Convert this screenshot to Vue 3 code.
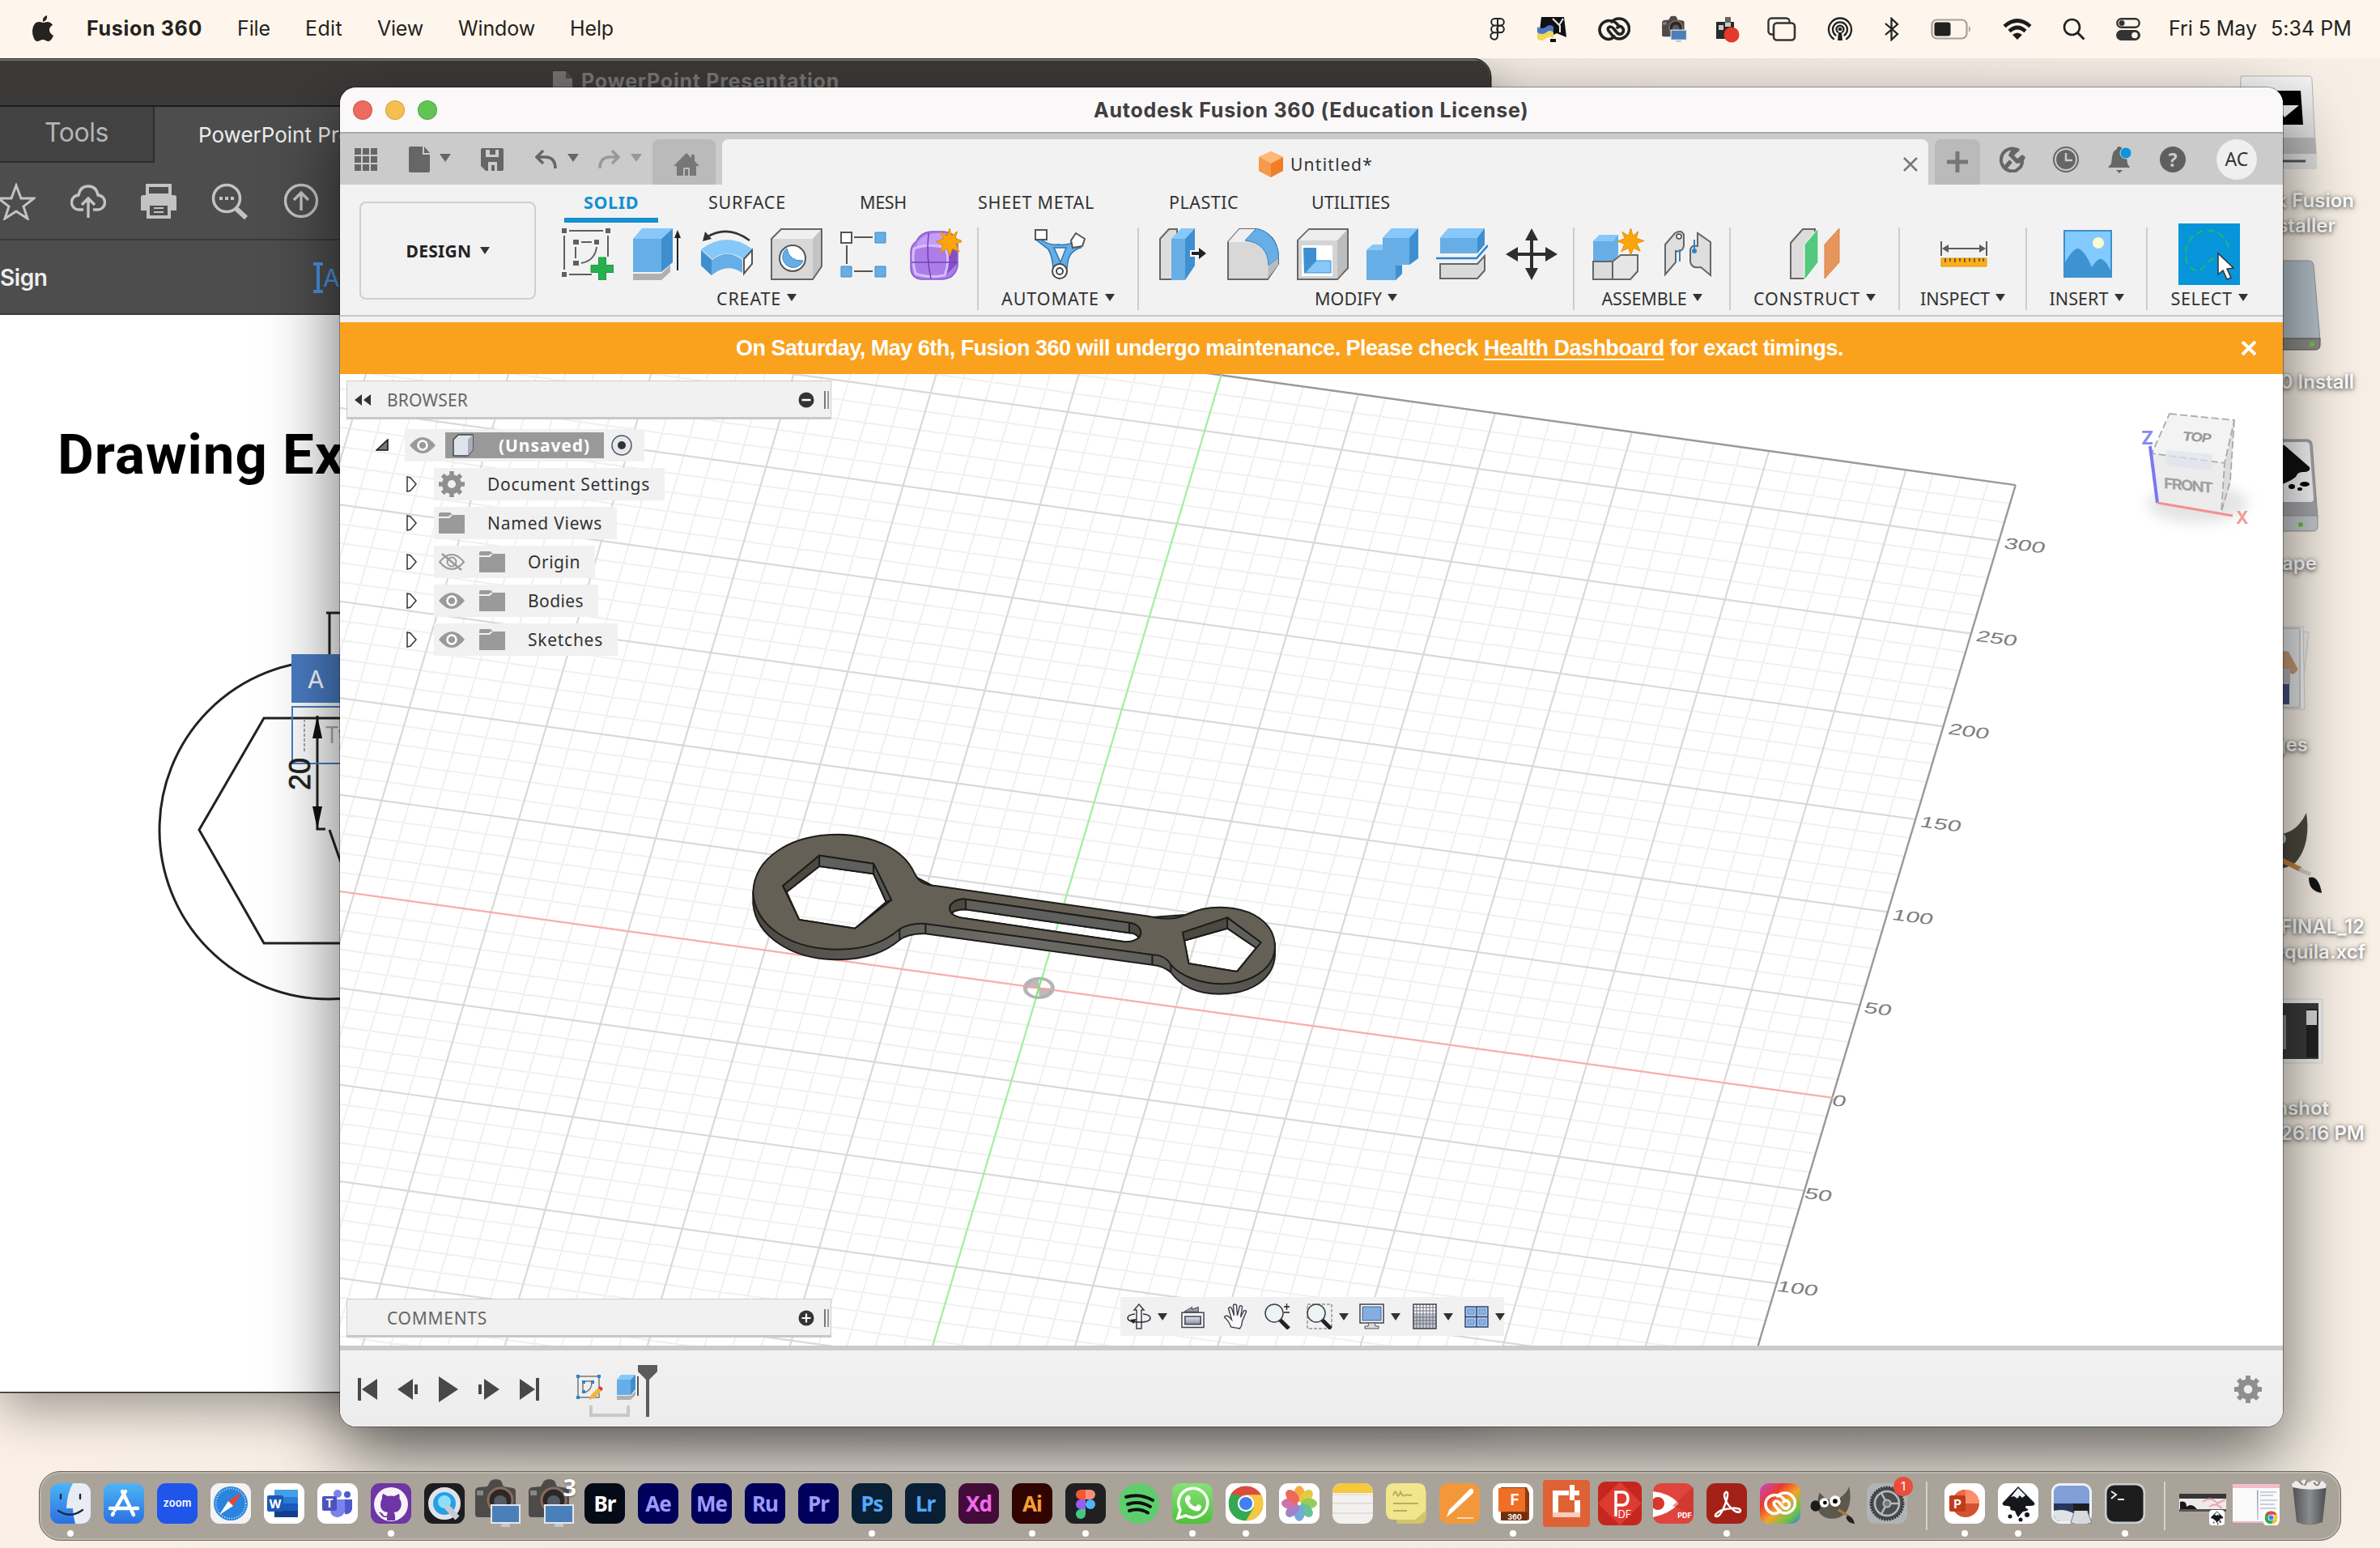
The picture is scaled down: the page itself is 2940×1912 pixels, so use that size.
<script setup>
/* Spreads a label over a known width by adjusting its tracking. */
const vFit = {
  mounted(el, { value }) {
    const w = el.getBoundingClientRect().width
    el.style.letterSpacing = (value - w) / el.textContent.length + 'px'
  }
}

const menus = [['File', 41], ['Edit', 46], ['View', 57], ['Window', 95], ['Help', 54]]
const status = [
  ['figma', 20], ['ukraine', 38], ['cc', 40], ['camera', 33], ['rec', 31], ['stack', 36], ['airdrop', 32],
  ['bt', 20], ['battery', 51], ['wifi', 36], ['search', 28], ['control', 30]
]

const groups = [
  { name: 'CREATE', w: 547, t: 80, icons: ['sketch', 'extrude', 'revolve', 'hole', 'pattern', 'form'] },
  { name: 'AUTOMATE', w: 198, t: 121, icons: ['automate'] },
  { name: 'MODIFY', w: 538, t: 83, icons: ['press', 'fillet', 'shell', 'combine', 'split', 'move'] },
  { name: 'ASSEMBLE', w: 193, t: 105, icons: ['component', 'joint'] },
  { name: 'CONSTRUCT', w: 209, t: 132, icons: ['construct'] },
  { name: 'INSPECT', w: 157, t: 86, icons: ['inspect'] },
  { name: 'INSERT', w: 149, t: 73, icons: ['insert'] },
  { name: 'SELECT', w: 152, t: 76, icons: ['select'] }
]

const tree = [
  { label: 'Document Settings', t: 201, icon: 'gear' },
  { label: 'Named Views', t: 142, icon: 'folder' },
  { label: 'Origin', t: 65, icon: 'folder', eye: 'eyeoff' },
  { label: 'Bodies', t: 69, icon: 'folder', eye: 'eye' },
  { label: 'Sketches', t: 93, icon: 'folder', eye: 'eye' }
]

/* Ground grid: origin plus one vector per 50 mm along each axis. */
const O = [863.4, 758.4], U = [169.2, 23.4], V = [34.1, -114.7]
const P = (i, j) => [O[0] + i * U[0] + j * V[0], O[1] + i * U[1] + j * V[1]]
const seg = (a, b) => `M${a[0].toFixed(1)} ${a[1].toFixed(1)}L${b[0].toFixed(1)} ${b[1].toFixed(1)}`
let minor = '', major = ''
for (let k = -60; k <= 28; k++) {
  const s = seg(P(k / 5, -9), P(k / 5, 6.6))
  if (k % 5) minor += s; else major += s
}
for (let k = -45; k <= 32; k++) {
  const s = seg(P(-9, k / 5), P(5.8, k / 5))
  if (k % 5) minor += s; else major += s
}
const edge = seg(P(-9, 6.6), P(5.8, 6.6)) + seg(P(5.8, 6.6), P(5.78, -9))
const redAxis = seg(P(-9, 0), P(5.8, 0))
const greenAxis = seg(P(0, -9), P(0, 6.6))
const ticks = [300, 250, 200, 150, 100, 50, 0, -50, -100].map(v => {
  const p = P(5.8, v / 50)
  const dx = v > 0 ? 2 + v / 100 : -3
  return { v: Math.abs(v), m: `matrix(1 .13 -.2 .62 ${p[0] + dx} ${p[1] + 9})` }
})

const nav = [['orbit', 30, 1, 8], ['look', 29, 0, 17], ['hand', 31, 0, 23], ['zoom', 32, 0, 20], ['zoomwin', 32, 1, 20], ['display', 31, 1, 13], ['grid', 30, 1, 15], ['views', 30, 1, 14]]

const dock = [
  { i: 'finder', on: 1 }, { i: 'appstore' }, { i: 'zoom' }, { i: 'safari' }, { i: 'word' }, { i: 'teams' }, { i: 'github', on: 1 },
  { i: 'quicktime' }, { i: 'camera' }, { i: 'camera', n: '3' },
  { a: 'Br', c: 'br' }, { a: 'Ae', c: 'ae' }, { a: 'Me', c: 'ae' }, { a: 'Ru', c: 'ae' }, { a: 'Pr', c: 'ae' },
  { a: 'Ps', c: 'ps', on: 1 }, { a: 'Lr', c: 'ps' }, { a: 'Xd', c: 'xd' }, { a: 'Ai', c: 'ai', on: 1 },
  { i: 'figma', on: 1 }, { i: 'spotify' }, { i: 'whatsapp', on: 1 }, { i: 'chrome', on: 1 }, { i: 'photos' }, { i: 'notes' },
  { i: 'stickies' }, { i: 'pages' }, { i: 'fusion', on: 1 }, { i: 'printer' }, { i: 'pdf' }, { i: 'pdfexpert' }, { i: 'acrobat', on: 1 },
  { i: 'cc' }, { i: 'gimp' }, { i: 'settings', badge: '1' }, { sep: 1 },
  { i: 'ppt', on: 1 }, { i: 'inkscape', on: 1 }, { i: 'preview' }, { i: 'terminal', on: 1 }, { sep: 1 },
  { i: 'win1' }, { i: 'win2' }, { i: 'trash' }
]

const deskLabels = [
  { lines: ['Autodesk Fusion', 'Installer'], r: [32, 55], y: 232 },
  { lines: ['Fusion 360 Install'], r: [32], y: 456 },
  { lines: ['Inkscape'], r: [78], y: 680 },
  { lines: ['Images'], r: [89], y: 904 },
  { lines: ['FINAL_12', 'Tequila.xcf'], r: [19, 18], y: 1129 },
  { lines: ['Screenshot', '5.26.16 PM'], r: [63, 19], y: 1353 }
]
</script>

<template>
  <div class="desktop">
    <svg width="0" height="0" class="defs">
      <defs>
        <linearGradient id="gMetal" x1="0" y1="0" x2="0" y2="1"><stop offset="0" stop-color="#f4f4f4"/><stop offset="1" stop-color="#cfd0d2"/></linearGradient>
        <linearGradient id="gBlue" x1="0" y1="0" x2="0" y2="1"><stop offset="0" stop-color="#4cb5f5"/><stop offset="1" stop-color="#2b6fe3"/></linearGradient>
        <linearGradient id="gGreen" x1="0" y1="0" x2="0" y2="1"><stop offset="0" stop-color="#86e277"/><stop offset="1" stop-color="#4fc13a"/></linearGradient>
        <linearGradient id="gSteel" x1="0" y1="0" x2="0" y2="1"><stop offset="0" stop-color="#dfe3ee"/><stop offset="1" stop-color="#8d919c"/></linearGradient>
        <linearGradient id="gTrash" x1="0" y1="0" x2="1" y2="0"><stop offset="0" stop-color="#4f5052"/><stop offset=".5" stop-color="#8b8c8d"/><stop offset="1" stop-color="#4a4b4d"/></linearGradient>
        <linearGradient id="gCc" x1="0" y1="0" x2="1" y2="1"><stop offset="0" stop-color="#c04bd6"/><stop offset=".3" stop-color="#ea3a2f"/><stop offset=".55" stop-color="#f3a42c"/><stop offset=".8" stop-color="#6cc24a"/><stop offset="1" stop-color="#2c7fe0"/></linearGradient>
        <linearGradient id="gWrench" x1="0" y1="0" x2="1" y2="0"><stop offset="0" stop-color="#4e4b44"/><stop offset=".5" stop-color="#6e6d69"/><stop offset="1" stop-color="#54524d"/></linearGradient>

        <symbol id="star" viewBox="0 0 34 34"><path d="M17 0l2.600 9.500L26.500 4l-2.500 8.500L34 16l-9.500 3L29 29l-8.500-4L17 34l-3-9-9 4.500 4-9.500L0 16.500 9.500 13 6 4.500l8 5z" fill="#fca50b" stroke="#e08e00" stroke-width="1"/></symbol>

        <symbol id="r-sketch" viewBox="0 0 64 64">
          <g fill="#5f5f5f"><path d="M0 0h6v6H0zM54 0h6v6h-6zM0 54h6v6H0zM14 14h7v6h-7zM40 14h6v6h-6zM14 40h7v6h-7z"/></g>
          <g fill="none" stroke="#5f5f5f" stroke-width="2"><path d="M9 3h42M3 9v42M57 9v26M9 57h28M24 17h13M17 23v14M43 23q-2 17-19 20"/></g>
          <path d="M45.500 36h9v9.500H64v9h-9.500V64h-9v-9.500H36v-9h9.500z" fill="#27b050" stroke="#159a3e"/>
        </symbol>
        <symbol id="r-extrude" viewBox="0 0 64 64">
          <path d="M2 56h35l11-11v9L37 64H2z" fill="#b0b0b0"/><path d="M2 13h35v41H2z" fill="#67aee6"/><path d="M2 13L13 0h38L37 13z" fill="#87c8fa"/><path d="M37 13L51 0v42L37 54z" fill="#3f8fd0"/>
          <path d="M57 52V8" stroke="#222" stroke-width="2"/><path d="M53 12l4-10 4 10z" fill="#222"/>
        </symbol>
        <symbol id="r-revolve" viewBox="0 0 64 64">
          <path d="M0 26Q32 2 64 26L52 38Q32 24 14 38z" fill="#87c8fa"/><path d="M0 27l14 12Q32 24 51 39v16Q32 42 13 58L0 46z" fill="#67aee6"/><path d="M0 27l13 12v19L0 46z" fill="#3f8fd0"/>
          <path d="M53 38l10-11v17L53 56z" fill="#fff" stroke="#555" stroke-width="2"/><path d="M60 15Q33-5 7 11" fill="none" stroke="#333" stroke-width="2.500"/><path d="M2 16l3-12 8 9z" fill="#333"/>
        </symbol>
        <symbol id="r-hole" viewBox="0 0 64 64">
          <path d="M1 13L13 1h50v46L52 63H1z" fill="#d8d8d8"/><path d="M1 13L13 1h50L52 13z" fill="#f0f0f0"/><path d="M52 13L63 1v46L52 63z" fill="#c4c4c4"/><path d="M1 13L13 1h50v46L52 63H1z" fill="none" stroke="#666" stroke-width="2"/>
          <circle cx="27" cy="37" r="16" fill="#fff" stroke="#555" stroke-width="2"/><path d="M20 25a13 13 0 1 0 20 15Q23 41 20 25z" fill="#67aee6" stroke="#2d84cc"/>
        </symbol>
        <symbol id="r-pattern" viewBox="0 0 64 64">
          <path d="M1 5h13v13H1z" fill="#fff" stroke="#555" stroke-width="2"/><g fill="#67aee6" stroke="#3d8ac9"><path d="M43 5h13v13H43zM1 47h13v13H1zM43 47h13v13H43z"/></g>
          <path d="M17 11h23M17 53h23M8 21v23" stroke="#555" stroke-width="2"/>
        </symbol>
        <symbol id="r-form" viewBox="0 0 64 64">
          <path d="M8 16Q14 4 28 4H42Q58 6 59 20V46Q56 62 40 63H14Q2 62 1 50V28Q2 20 8 16z" fill="#ab7de8" stroke="#8d5bcc" stroke-width="1.500"/>
          <path d="M10 16Q20 4 44 6L46 22H8z" fill="#c59df6"/><path d="M46 26h12v18l-12 12z" fill="#8650c4"/><path d="M5 25Q22 18 44 24Q50 40 43 58Q22 62 7 56Q2 40 5 25z" fill="none" stroke="#d9bcff" stroke-width="3"/><path d="M23 6Q20 36 26 62M2 42h57" fill="none" stroke="#7541ae" stroke-width="1.500"/>
          <use href="#star" x="32" y="0" width="34" height="34"/>
        </symbol>
        <symbol id="r-automate" viewBox="0 0 64 64">
          <path d="M6 12Q20 22 30 20Q44 22 52 14L58 24Q44 28 42 42L40 56Q32 62 24 54Q24 36 18 26L4 15z" fill="#67aee6" stroke="#2c77b8" stroke-width="1.500"/>
          <path d="M25 24h15L33 42z" fill="#f2f2f2" stroke="#2c77b8" stroke-width="1.500"/><path d="M2 2h14v12H2z" fill="#fff" stroke="#555" stroke-width="2"/><path d="M52 6l11 7-3 9-12 2-2-9z" fill="#fff" stroke="#555" stroke-width="2"/><circle cx="32" cy="53" r="9" fill="#fff" stroke="#444" stroke-width="2"/><circle cx="32" cy="53" r="4" fill="#fff" stroke="#444" stroke-width="2"/>
        </symbol>
        <symbol id="r-press" viewBox="0 0 64 64">
          <path d="M3 13L14 1h10v62H3z" fill="#ddd" stroke="#666" stroke-width="2"/><path d="M17 13h17v51H17z" fill="#67aee6"/><path d="M17 13L29 0h17L34 13z" fill="#87c8fa"/><path d="M34 13L46 0v46L34 64z" fill="#3f8fd0"/>
          <path d="M40 31h12" stroke="#fff" stroke-width="8"/><path d="M42 31h12" stroke="#222" stroke-width="4"/><path d="M51 24l9 7-9 7z" fill="#222"/>
        </symbol>
        <symbol id="r-fillet" viewBox="0 0 64 64">
          <path d="M1 17L15 1h20Q62 6 63 36v8L50 63H1z" fill="#d8d8d8" stroke="#666" stroke-width="2"/><path d="M1 17L15 1h20L22 17z" fill="#efefef"/><path d="M22 15L36 0Q61 6 64 36L51 46Q50 18 22 15z" fill="#67aee6" stroke="#2d84cc"/><path d="M51 46l12-9v8L50 62z" fill="#bbb"/>
        </symbol>
        <symbol id="r-shell" viewBox="0 0 64 64">
          <path d="M1 15L15 1h48v48L50 63H1z" fill="#d4d4d4" stroke="#666" stroke-width="2"/><path d="M2 15L15 2h47L50 15z" fill="#eee"/><path d="M50 15L62 2v46L50 62z" fill="#bdbdbd"/><path d="M6 21h38v38H6z" fill="#fff"/><path d="M8 24h16v16L9 56z" fill="#3f8fd0"/><path d="M24 40h18v15H10z" fill="#87c8fa" stroke="#3f8fd0"/>
        </symbol>
        <symbol id="r-combine" viewBox="0 0 64 64">
          <path d="M0 27l8-7h12V12L31 0h33v37L53 45H44v11l-8 8H0z" fill="#67aee6"/><path d="M20 12L31 0h33L53 12zM0 27l8-7h12v7z" fill="#87c8fa"/><path d="M53 12L64 0v37L53 45zM36 46h8v10l-8 8z" fill="#3f8fd0"/>
        </symbol>
        <symbol id="r-split" viewBox="0 0 64 64">
          <path d="M5 12L15 0h45v20L51 31H5z" fill="#67aee6"/><path d="M5 12L15 0h45L51 12z" fill="#87c8fa"/><path d="M51 12l9-12v20L51 31z" fill="#3f8fd0"/><path d="M0 37h50l14-16" fill="none" stroke="#2d84cc" stroke-width="2.500"/><path d="M5 44h46l9-10v18L51 62H5z" fill="#dadada" stroke="#666" stroke-width="2"/>
        </symbol>
        <symbol id="r-move" viewBox="0 0 64 64"><path d="M32 0l8 15h-6v15h15v-7l15 9-15 9v-7H34v15h6l-8 15-8-15h6V34H15v7L0 32l15-9v7h15V15h-6z" fill="#2e2e2e"/></symbol>
        <symbol id="r-component" viewBox="0 0 64 64">
          <path d="M1 16l8-8h23v25l-6 8H1z" fill="#67aee6"/><path d="M1 16l8-8h23l-6 8z" fill="#87c8fa"/><path d="M1 41h24v22H1z" fill="#dcdcdc" stroke="#666" stroke-width="2"/><path d="M25 41l10-8h21v20l-9 10H25z" fill="#e6e6e6" stroke="#666" stroke-width="2"/><use href="#star" x="31" y="0" width="33" height="33"/>
        </symbol>
        <symbol id="r-joint" viewBox="0 0 64 64">
          <path d="M4 20l12-14q8-5 11 2v14q-2 8-10 6v14L4 57z" fill="#dedede" stroke="#666" stroke-width="2"/><path d="M60 58L48 48q-12 2-13-7V26q2-6 9-4V6l16 11z" fill="#dedede" stroke="#666" stroke-width="2"/><circle cx="21" cy="10" r="3" fill="#fff" stroke="#444" stroke-width="1.500"/><path d="M22 26v15M40 14v12" stroke="#2d84cc" stroke-width="2"/><circle cx="40" cy="28" r="3" fill="#2d84cc"/>
        </symbol>
        <symbol id="r-construct" viewBox="0 0 64 64"><path d="M1 18L16 1h15v16L18 62H1z" fill="#dcdcdc" stroke="#666" stroke-width="2"/><path d="M18 20L35 0v42L18 64z" fill="#52c97c" stroke="#fff"/><path d="M43 20L61 0v42L43 62z" fill="#e8955c" stroke="#d5824a"/></symbol>
        <symbol id="r-inspect" viewBox="0 0 64 64"><path d="M4 16v18M60 16v18M8 25h48" stroke="#5c5c5c" stroke-width="2"/><path d="M5 25l8-5v10zM59 25l-8-5v10z" fill="#5c5c5c"/><path d="M4 37h56v10H4z" fill="#fcae15" stroke="#e0930a"/><path d="M9 37v5M15 37v4M21 37v5M27 37v4M33 37v5M39 37v4M45 37v5M51 37v4M56 37v4" stroke="#444" stroke-width="1.500"/></symbol>
        <symbol id="r-insert" viewBox="0 0 64 64"><path d="M3 3h58v57H3z" fill="#82caff" stroke="#3f8fd0" stroke-width="2"/><path d="M3 60V44Q14 24 20 25Q28 27 37 48Q45 36 49 38Q55 40 61 54v6z" fill="#3d93cf"/><circle cx="45" cy="18" r="7" fill="#fdfbd2"/></symbol>
        <symbol id="r-select" viewBox="0 0 76 76"><path d="M0 0h76v76H0z" fill="#0795d9"/><path d="M62 30A26 26 0 0 0 22 13A27 27 0 0 0 9 40q0 14 12 18q8 1 15-10q8-8 14-5" fill="none" stroke="#23b573" stroke-width="2" stroke-dasharray="9 5"/><path d="M49 37v26l6-5 5 11 5-2-5-11 8-1z" fill="#fff" stroke="#333" stroke-width="1.500"/></symbol>

        <symbol id="eye" viewBox="0 0 32 24"><path d="M0 12Q16-8 32 12Q16 32 0 12z" fill="#9a9a9a"/><circle cx="16" cy="12" r="5.500" fill="none" stroke="#fff" stroke-width="2.500"/></symbol>
        <symbol id="eyeoff" viewBox="0 0 32 24"><path d="M1 12Q16-6 31 12Q16 30 1 12z" fill="none" stroke="#9a9a9a" stroke-width="2"/><circle cx="16" cy="12" r="5.500" fill="none" stroke="#9a9a9a" stroke-width="2"/><path d="M4 2l24 20" stroke="#9a9a9a" stroke-width="2.500"/></symbol>
        <symbol id="folder" viewBox="0 0 32 26"><path d="M0 2q0-2 2-2h12l3 3h-3l-2 2H0zM0 7h13l4-4h15v23H0z" fill="#9a9a9a"/></symbol>
        <symbol id="gear" viewBox="0 0 32 32"><circle cx="16" cy="16" r="8.500" fill="none" stroke="#8f8f8f" stroke-width="7"/><path d="M16 0v5M16 27v5M0 16h5M27 16h5M4.700 4.700l3.500 3.500M23.800 23.800l3.500 3.500M4.700 27.300l3.500-3.500M23.800 8.200l3.500-3.500" stroke="#8f8f8f" stroke-width="5.500"/></symbol>
        <symbol id="chrome" viewBox="0 0 40 40"><circle cx="20" cy="20" r="20" fill="#34a853"/><path d="M2.700 10A20 20 0 0 1 37.300 10H20z" fill="#dd4b3e"/><path d="M20 20L2.700 10A20 20 0 0 1 37.300 10z" fill="#dd4b3e"/><path d="M20 10h17.300A20 20 0 0 1 20 40l9-15z" fill="#f9c642"/><path d="M2.700 10L12 26l8-6-8-10z" fill="#34a853"/><circle cx="20" cy="20" r="9.500" fill="#fff"/><circle cx="20" cy="20" r="7.500" fill="#4380ee"/></symbol>
        <symbol id="ccmark" viewBox="0 0 40 30"><g fill="none" stroke="currentColor" stroke-width="3.600" stroke-linecap="round"><path d="M20 24q-3 3.500-7 3.500a11 11 0 0 1 1-23q7 0 11 6"/><path d="M17 6q3-4 9-4a12.500 12.500 0 0 1 0 25q-5 0-8-4l-5-6q-2-4 2-5 2 0 4 2l5 6q3 2.500 6 0 3-4 0-7-3-3-6 0"/></g></symbol>
        <symbol id="ink" viewBox="0 0 50 50"><path d="M25 4l20 20q2 4-5 4h-5q-3 2 2 4 2 2-6 3-3 3-6 7-3-4-4-8-6 0-6-3 2-2-3-3-8 0-6-4z" fill="#15171d"/><path d="M25 6l9 9-4 3-3-3-3 4-4-3-4 1z" fill="#eef1f6"/><circle cx="15" cy="41" r="2.500" fill="#15171d"/><circle cx="36" cy="39" r="3" fill="#15171d"/><circle cx="28" cy="45" r="2.500" fill="#15171d"/></symbol>
        <symbol id="wilber" viewBox="0 0 60 50"><path d="M12 10l8 8q12 4 22-4 6-6 8-12 4 22-4 33-8 10-22 8-10-2-13-9-3-12 1-24z" fill="#5d584c"/><ellipse cx="7" cy="27" rx="6.500" ry="7" fill="#1b1b1b"/><circle cx="18" cy="23" r="6" fill="#fff"/><circle cx="32" cy="21" r="7" fill="#fff"/><circle cx="19" cy="23" r="2.500"/><circle cx="32" cy="21" r="3"/><path d="M36 32l13 8" stroke="#b87a3a" stroke-width="3"/><path d="M48 39q7 2 9 11-9-1-11-8z" fill="#222"/></symbol>

        <symbol id="d-finder" viewBox="0 0 50 50"><rect width="50" height="50" rx="11" fill="url(#gBlue)"/><path d="M28 0h11a11 11 0 0 1 11 11v28a11 11 0 0 1-11 11H31Q28 40 28 31H20Q21 12 28 0z" fill="#e9edf3"/><path d="M13 14v5M37 14v5M10 34q15 10 30-1" stroke="#1d2c40" stroke-width="2.400" fill="none" stroke-linecap="round"/></symbol>
        <symbol id="d-appstore" viewBox="0 0 50 50"><rect width="50" height="50" rx="11" fill="url(#gBlue)"/><path d="M27 10L14 33M23 10l14 29M8 31h22M37 31h5M12 37l-1 2" stroke="#fff" stroke-width="4.500" stroke-linecap="round"/></symbol>
        <symbol id="d-zoom" viewBox="0 0 50 50"><rect width="50" height="50" rx="11" fill="#1f55ea"/><text x="25" y="29" font-size="13" font-weight="600" fill="#fff" text-anchor="middle" font-family="Inter, sans-serif" textLength="35">zoom</text></symbol>
        <symbol id="d-safari" viewBox="0 0 50 50"><rect width="50" height="50" rx="11" fill="#f3f3f3"/><circle cx="25" cy="25" r="21" fill="#2a84dc"/><circle cx="25" cy="25" r="18.500" fill="none" stroke="#bfe0fb" stroke-width="2" stroke-dasharray="1 2"/><path d="M39 11L28 28l-6-6z" fill="#ee4237"/><path d="M11 39l17-11-6-6z" fill="#fff"/></symbol>
        <symbol id="d-word" viewBox="0 0 50 50"><rect width="50" height="50" rx="11" fill="#fff"/><path d="M13 8h29v9H13z" fill="#41a0e8"/><path d="M13 17h29v8H13z" fill="#2b7bd4"/><path d="M13 25h29v9H13z" fill="#185abd"/><path d="M13 34h29v8H13z" fill="#103f91"/><rect x="4" y="15" width="20" height="20" rx="2" fill="#1e58b5"/><text x="14" y="31" font-size="15" font-weight="700" fill="#fff" text-anchor="middle" font-family="Inter, sans-serif">W</text></symbol>
        <symbol id="d-teams" viewBox="0 0 50 50"><rect width="50" height="50" rx="11" fill="#fff"/><circle cx="25" cy="13" r="5" fill="#7b83eb"/><circle cx="37" cy="14" r="4" fill="#5059c9"/><path d="M30 20h13v12q-2 7-9 6z" fill="#5059c9"/><path d="M16 20h18v14q-2 8-10 8-8-1-8-9z" fill="#7b83eb"/><rect x="6" y="16" width="18" height="18" rx="2" fill="#4b53bc"/><text x="15" y="30" font-size="14" font-weight="700" fill="#fff" text-anchor="middle" font-family="Inter, sans-serif">T</text></symbol>
        <symbol id="d-github" viewBox="0 0 50 50"><rect width="50" height="50" rx="11" fill="#6e35a4"/><circle cx="25" cy="26" r="21" fill="#f5f3f8"/><path d="M15 13l6 3q4-1 8 0l6-3q1 3 .5 6 3 4 2 9-1 7-9 8 2 2 1.500 10H20v-4q-6 1-8-4l-2-2q3-1 6 4 2 1 4 0 0-2 1-4-8-1-9-8-.5-5 2-9-.5-3 1-6z" fill="#6e35a4"/></symbol>
        <symbol id="d-quicktime" viewBox="0 0 50 50"><rect width="50" height="50" rx="11" fill="#1c1d20"/><circle cx="25" cy="25" r="17" fill="#279fe8" stroke="#dfe3ea" stroke-width="6"/><circle cx="25" cy="23" r="8" fill="#8be0fd"/><path d="M27 28l14 15" stroke="#c7ccd4" stroke-width="7"/></symbol>
        <symbol id="d-camera" viewBox="0 0 60 60"><path d="M2 15q0-4 4-5l11-1 4-7q7-4 13 0l3 7 12 2q3 1 3 4v28q0 4-4 4H6q-4 0-4-4z" fill="#4c4b4a"/><path d="M4 14h8v6H4z" fill="#878683"/><circle cx="33" cy="26" r="15" fill="#2b2826" stroke="#8b6a5f" stroke-width="3"/><circle cx="33" cy="28" r="8" fill="#555a63"/><path d="M21 31h37v24H21z" fill="#e4e7ec"/><path d="M23 33h33v20H23z" fill="#4a80b9"/><path d="M35 55h10v4H33z" fill="#c4c7cc"/></symbol>
        <symbol id="d-figma" viewBox="0 0 50 50"><rect width="50" height="50" rx="11" fill="#202022"/><path d="M25 8h-6a6 6 0 0 0 0 12h6z" fill="#ef5a32"/><path d="M25 8h6a6 6 0 0 1 0 12h-6z" fill="#f98d7d"/><path d="M25 20h-6a6 6 0 0 0 0 12h6z" fill="#9a5cf5"/><circle cx="31" cy="26" r="6" fill="#4cb8f8"/><path d="M25 32h-6a6 6 0 1 0 6 6z" fill="#42c984"/></symbol>
        <symbol id="d-spotify" viewBox="0 0 50 50"><circle cx="25" cy="25" r="25" fill="#5ccf6c"/><path d="M9 17q17-5 33 4M11 26q14-5 28 3M13 34q12-4 23 2.500" stroke="#111" stroke-width="4" fill="none" stroke-linecap="round"/></symbol>
        <symbol id="d-whatsapp" viewBox="0 0 50 50"><rect width="50" height="50" rx="11" fill="url(#gGreen)"/><path d="M7 43l3-10a18 18 0 1 1 7 7z" fill="none" stroke="#fff" stroke-width="3.500"/><path d="M19 15q3-1 4 4l-2 3q3 6 8 7l3-3q5 1 4 4-2 6-8 4-9-3-12-12-1-5 3-7z" fill="#fff"/></symbol>
        <symbol id="d-chrome" viewBox="0 0 50 50"><rect width="50" height="50" rx="11" fill="#fff"/><use href="#chrome" x="3.500" y="3.500" width="43" height="43"/></symbol>
        <symbol id="d-photos" viewBox="0 0 50 50"><rect width="50" height="50" rx="11" fill="#fff"/><g opacity=".88"><ellipse cx="25" cy="13" rx="6.500" ry="10" fill="#f6a12a"/><ellipse cx="25" cy="13" rx="6.500" ry="10" fill="#dcc628" transform="rotate(45 25 25)"/><ellipse cx="25" cy="13" rx="6.500" ry="10" fill="#8dc343" transform="rotate(90 25 25)"/><ellipse cx="25" cy="13" rx="6.500" ry="10" fill="#54b98c" transform="rotate(135 25 25)"/><ellipse cx="25" cy="13" rx="6.500" ry="10" fill="#5f9ed6" transform="rotate(180 25 25)"/><ellipse cx="25" cy="13" rx="6.500" ry="10" fill="#9172c0" transform="rotate(225 25 25)"/><ellipse cx="25" cy="13" rx="6.500" ry="10" fill="#c85fa0" transform="rotate(270 25 25)"/><ellipse cx="25" cy="13" rx="6.500" ry="10" fill="#ea5545" transform="rotate(315 25 25)"/></g></symbol>
        <symbol id="d-notes" viewBox="0 0 50 50"><rect width="50" height="50" rx="11" fill="#f2f1ef"/><path d="M0 12A12 12 0 0 1 12 0h26a12 12 0 0 1 12 12z" fill="#f6c83c"/><path d="M0 14h50" stroke="#bbb" stroke-dasharray="1.500 2"/><path d="M0 25h50M0 37h50" stroke="#ccc"/></symbol>
        <symbol id="d-stickies" viewBox="0 0 50 50"><path d="M4 10h46v30q0 10-10 10H14z" fill="#d2c766"/><path d="M10 0h30q9 0 9 10v24L36 45H10Q0 45 0 35V10Q0 0 10 0z" fill="#f1e68c"/><path d="M9 15q3-9 5 0 2 2 4-4 3 7 8 3 3 2 6 0M9 25h31M9 34h17" stroke="#b9ad5e" stroke-width="2" fill="none"/></symbol>
        <symbol id="d-pages" viewBox="0 0 50 50"><rect width="50" height="50" rx="11" fill="#f2983b"/><path d="M38 7q5-1 4 5L16 36l-7 6 3-9z" fill="#fff"/><path d="M22 43h20" stroke="#fbd6aa" stroke-width="2"/></symbol>
        <symbol id="d-fusion" viewBox="0 0 50 50"><rect width="50" height="50" rx="11" fill="#fff"/><path d="M10 5h32l3 7v33H10z" fill="#8c3c12"/><path d="M7 6h33v29H7z" fill="#ef6f26"/><path d="M10 36h33v10H10z" fill="#6f2f0c"/><text x="27" y="27" font-size="19" font-weight="700" fill="#fff" text-anchor="middle" font-family="Inter, sans-serif">F</text><text x="27" y="44.500" font-size="9" font-weight="700" fill="#fff" text-anchor="middle" font-family="Inter, sans-serif">360</text></symbol>
        <symbol id="d-printer" viewBox="0 0 60 60"><rect x="1" y="1" width="58" height="58" rx="4" fill="#df6236"/><path d="M13 14h20v6H20v21h20V26h7v21H13z" fill="#fff"/><path d="M34 14v-7h6v7h6v6h-6v6h-6v-6z" fill="#fff"/><path d="M13 41h34v6H13z" fill="#f7cdbd"/></symbol>
        <symbol id="d-pdf" viewBox="0 0 54 54"><rect width="54" height="54" rx="9" fill="#c5261d"/><path d="M0 27L27 0l27 27-27 27z" fill="#de3a30"/><path d="M22 43V13h9q6 1 6 8t-6 8h-9" fill="none" stroke="#fff" stroke-width="3.500"/><text x="33" y="45" font-size="13" fill="#fff" text-anchor="middle" font-family="Inter, sans-serif">DF</text></symbol>
        <symbol id="d-pdfexpert" viewBox="0 0 50 50"><rect width="50" height="50" rx="10" fill="#e0443d"/><path d="M0 10q20 2 32 15Q20 38 0 42z" fill="#fff"/><circle cx="6" cy="25" r="8" fill="#d8352d"/><path d="M24 28L50 4v35z" fill="#c02d28" opacity=".5"/><text x="39" y="43" font-size="9" font-weight="700" fill="#fff" text-anchor="middle" font-family="Inter, sans-serif">PDF</text></symbol>
        <symbol id="d-acrobat" viewBox="0 0 50 50"><rect width="50" height="50" rx="11" fill="#a32117"/><path d="M24 11q-4 2 0 11 4 8 12 13 6 2 6-1 0-4-12-3-11 1-16 5-5 4-2 5 4 1 9-10 6-14 5-19-1-2-2-1z" fill="none" stroke="#fff" stroke-width="2.500"/></symbol>
        <symbol id="d-cc" viewBox="0 0 50 50"><rect width="50" height="50" rx="11" fill="url(#gCc)"/><use href="#ccmark" x="5" y="10" width="40" height="30" color="#fff"/></symbol>
        <symbol id="d-gimp" viewBox="0 0 58 52"><use href="#wilber" width="58" height="50" y="1"/></symbol>
        <symbol id="d-settings" viewBox="0 0 50 50"><rect width="50" height="50" rx="11" fill="#b0b4b5"/><circle cx="25" cy="25" r="20" fill="#4b4d4f" stroke="#333" stroke-width="3" stroke-dasharray="2 1.300"/><circle cx="25" cy="25" r="15" fill="none" stroke="#b9bcbd" stroke-width="2.500"/><path d="M25 25h14M25 25L18 12M25 25L18 38" stroke="#b9bcbd" stroke-width="2.500"/><circle cx="25" cy="25" r="4.500" fill="#777" stroke="#b9bcbd" stroke-width="2"/></symbol>
        <symbol id="d-ppt" viewBox="0 0 50 50"><rect width="50" height="50" rx="11" fill="#fff"/><circle cx="26" cy="25" r="17" fill="#d35230"/><path d="M26 8a17 17 0 0 1 17 17H26z" fill="#ff8f6b"/><path d="M26 8a17 17 0 0 0-17 17h17z" fill="#ed6c47"/><rect x="6" y="15" width="20" height="20" rx="2" fill="#c13b1b"/><text x="16" y="31" font-size="15" font-weight="700" fill="#fff" text-anchor="middle" font-family="Inter, sans-serif">P</text></symbol>
        <symbol id="d-inkscape" viewBox="0 0 50 50"><rect width="50" height="50" rx="11" fill="#fff"/><use href="#ink" width="50" height="50"/></symbol>
        <symbol id="d-preview" viewBox="0 0 50 50"><rect width="50" height="50" rx="11" fill="#eff2f4"/><rect x="3" y="3" width="44" height="44" rx="8" fill="#7f9fd6"/><path d="M3 25h44v14a8 8 0 0 1-8 8H11a8 8 0 0 1-8-8z" fill="#27355a"/><path d="M3 34q14-3 26 4v9H11a8 8 0 0 1-8-8z" fill="#dfe3e6"/><path d="M28 26h17v10l5 13q-14 4-26 0l4-13z" fill="#d5dadf" stroke="#777"/><path d="M27 25h19v9H27z" fill="#1e1e1e"/></symbol>
        <symbol id="d-terminal" viewBox="0 0 50 50"><rect width="50" height="50" rx="11" fill="#c9cfce"/><rect x="2.500" y="2.500" width="45" height="45" rx="9" fill="#1d1d1d"/><path d="M8 10l6 4-6 5M16 20h8" stroke="#eee" stroke-width="2" fill="none"/></symbol>
        <symbol id="d-win1" viewBox="0 0 60 60"><path d="M1 18h58v22H1z" fill="#efeaea"/><path d="M1 18h58v6H1z" fill="#373738"/><path d="M1 37h58v3H1z" fill="#555"/><path d="M2 37V28q8-2 8 6 5-4 10 0l3 3z" fill="#1b1718"/><path d="M30 28q10-8 18 2l10-5M38 34q8-6 16 2" stroke="#ef9fb2" stroke-width="2" fill="none"/><rect x="38" y="38" width="19" height="19" rx="4" fill="#fff"/><use href="#ink" x="38" y="38" width="19" height="19"/></symbol>
        <symbol id="d-win2" viewBox="0 0 60 60"><path d="M1 6h58v48H1z" fill="#fafafb"/><path d="M1 6h58v5H1z" fill="#f3bdca"/><path d="M1 52h58v2H1z" fill="#efb8c6"/><path d="M31 14h1v36M35 16h20M35 20h16M35 26h21M35 31h18M35 36h20" stroke="#b9c3d6" stroke-width="1.500"/><rect x="39" y="38" width="19" height="19" rx="4" fill="#fff"/><use href="#chrome" x="40.500" y="39.500" width="16" height="16"/></symbol>
        <symbol id="d-trash" viewBox="0 0 46 58"><path d="M2 7h42l-5 46q-16 7-32 0z" fill="url(#gTrash)"/><path d="M2 10L1 6l5-4 5 2 5-4 6 4 6-3 6 3 5-2 5 5-1 4q-20 4-41-1z" fill="#ececed"/><path d="M10 3l5 4M20 2l-3 6M28 4l4 4M36 3l-3 5" stroke="#9a7a66" stroke-width="2"/></symbol>

        <symbol id="s-figma" viewBox="0 0 20 30"><path d="M10 2H6.500a4.300 4.300 0 0 0 0 8.600H10zM10 2h3.500a4.300 4.300 0 0 1 0 8.600H10zM10 10.600H6.500a4.300 4.300 0 0 0 0 8.700H10zM10 19.300H6.500a4.300 4.300 0 1 0 3.500 4.300z" fill="none" stroke="#222" stroke-width="2"/><circle cx="13.500" cy="15" r="4.300" fill="none" stroke="#222" stroke-width="2"/></symbol>
        <symbol id="s-ukraine" viewBox="0 0 38 34"><path d="M6 2h28l3 25-12-5-8 4H3z" fill="#111"/><path d="M20 4l8 8 5-8M29 12v9" stroke="#eee" stroke-width="2" fill="none"/><path d="M1 14q6 4 11 0t9 0v7q-5-3-10 1t-10 0z" fill="#4a76c9"/><path d="M1 21q6 4 11 0t9 0v7q-5-3-10 1t-10 0z" fill="#f0d755"/><path d="M17 29h7v4h-7z" fill="#111"/></symbol>
        <symbol id="s-camera" viewBox="0 0 60 60"><use href="#d-camera" width="60" height="60"/></symbol>
        <symbol id="s-rec" viewBox="0 0 31 34"><path d="M1 8h22v21H1z" fill="#2a2a2a"/><path d="M4 12h6v6H4zM12 8h7v6h-7z" fill="#cfcabf"/><path d="M12 2h7v7h-7z" fill="#666"/><circle cx="20" cy="24" r="9.500" fill="#e4392b"/></symbol>
        <symbol id="s-stack" viewBox="0 0 36 30"><rect x="1.500" y="1.500" width="26" height="20" rx="4" fill="none" stroke="#333" stroke-width="2.400"/><rect x="8" y="7.500" width="26" height="21" rx="4" fill="#fef6ec" stroke="#333" stroke-width="2.600"/></symbol>
        <symbol id="s-airdrop" viewBox="0 0 32 30"><g fill="none" stroke="#222" stroke-width="2.300" stroke-linecap="round"><path d="M8 27A14 14 0 1 1 24 27M10.500 22.500a9 9 0 1 1 11 0M13 18.500a4.500 4.500 0 1 1 6 0"/></g><circle cx="16" cy="15" r="2.300" fill="#222"/><path d="M14 19h4l1 10h-6z" fill="#222"/></symbol>
        <symbol id="s-bt" viewBox="0 0 20 30"><path d="M2 8l15 13-7.500 7V2L17 9 2 22" fill="none" stroke="#222" stroke-width="2.300"/></symbol>
        <symbol id="s-battery" viewBox="0 0 51 26"><rect x="1.500" y="1.500" width="43" height="23" rx="6" fill="none" stroke="#a5a09a" stroke-width="2.200"/><rect x="4.500" y="4.500" width="20" height="17" rx="3" fill="#222"/><path d="M47 9q4 4 0 8z" fill="#a5a09a"/></symbol>
        <symbol id="s-wifi" viewBox="0 0 36 26"><path d="M2 9.500q16-14 32 0M8 15.500q10-9 20 0" fill="none" stroke="#1d1d1d" stroke-width="4.600"/><path d="M12 20q6-5 12 0l-6 6z" fill="#1d1d1d"/></symbol>
        <symbol id="s-search" viewBox="0 0 28 28"><circle cx="11.500" cy="11.500" r="9.500" fill="none" stroke="#222" stroke-width="2.600"/><path d="M18.500 18.500l8 8" stroke="#222" stroke-width="3"/></symbol>
        <symbol id="s-control" viewBox="0 0 30 28"><rect x="1.300" y="1.300" width="27.400" height="10.400" rx="5.200" fill="none" stroke="#333" stroke-width="2.400"/><circle cx="7" cy="6.500" r="3.500" fill="#333"/><rect y="15" width="30" height="13" rx="6.500" fill="#333"/><circle cx="23" cy="21.500" r="3.800" fill="#fef6ec"/></symbol>
        <symbol id="s-cc" viewBox="0 0 40 30"><use href="#ccmark" width="40" height="30" color="#222"/></symbol>

        <symbol id="n-orbit" viewBox="0 0 30 32"><path d="M12 8H9l6-7 6 7h-3v23h-6z" fill="#f5f5f7" stroke="#3c404a" stroke-width="1.500"/><path d="M10 13q-9 1-9 5 0 5 14 5t14-5q0-4-9-5" fill="none" stroke="#2c3038" stroke-width="1.500"/><path d="M4 20l8-1-4 6z" fill="#222"/></symbol>
        <symbol id="n-look" viewBox="0 0 30 32"><path d="M4 10l10-6v3l8-3v6z" fill="#9d9fa6" stroke="#3c404a"/><rect x="1" y="11" width="28" height="19" fill="#f3f4f6" stroke="#3c404a" stroke-width="1.500"/><rect x="5" y="16" width="20" height="10" fill="url(#gSteel)" stroke="#3c404a" stroke-width="1.500"/></symbol>
        <symbol id="n-hand" viewBox="0 0 30 32"><path d="M9 29Q7 22 1 17q1-3 5-1l4 4L6 6q2-3 4 0l3 9-1-13q2-2 4 0l1 13 3-12q3-1 3 2l-2 12 4-8q3-1 3 1l-5 12q0 5-3 9z" fill="#fbfbfc" stroke="#3c404a" stroke-width="1.400"/></symbol>
        <symbol id="n-zoom" viewBox="0 0 32 32"><path d="M19 20l11 11" stroke="#222" stroke-width="5"/><circle cx="12" cy="12" r="11" fill="#eef4f4" stroke="#3c404a" stroke-width="1.500"/><path d="M24 4h7M27.500 0v8M24 11h7" stroke="#222" stroke-width="1.300"/></symbol>
        <symbol id="n-zoomwin" viewBox="0 0 32 32"><path d="M1 1h30v30H1z" fill="none" stroke="#666" stroke-dasharray="4 2"/><path d="M19 20l11 11" stroke="#222" stroke-width="5"/><circle cx="12" cy="12" r="11" fill="#eef4f4" stroke="#3c404a" stroke-width="1.500"/></symbol>
        <symbol id="n-display" viewBox="0 0 31 32"><rect x="1" y="1" width="29" height="23" fill="#fff" stroke="#3c404a" stroke-width="1.500"/><rect x="4" y="4" width="23" height="17" fill="#86addf" stroke="#3c5c94"/><path d="M12 24h7l1 4h4v3H7v-3h4z" fill="#d8dade" stroke="#555"/></symbol>
        <symbol id="n-grid" viewBox="0 0 30 32"><rect x="1" y="1" width="28" height="30" fill="#fff"/><rect x="1" y="14" width="28" height="17" fill="#c4c8d2"/><path d="M5 1v30M9 1v30M13 1v30M17 1v30M21 1v30M25 1v30M1 5h28M1 9h28M1 13h28M1 17h28M1 21h28M1 25h28" stroke="#6a6e78"/><rect x="1" y="1" width="28" height="30" fill="none" stroke="#3c404a" stroke-width="1.500"/></symbol>
        <symbol id="n-views" viewBox="0 0 30 32"><rect x="1" y="4" width="28" height="25" fill="#a9c7ea" stroke="#33496f" stroke-width="1.500"/><path d="M15 4v25M1 16.500h28" stroke="#33496f" stroke-width="1.500"/><path d="M4 7h8v6H4zM18 7h8v6h-8zM4 20h8v6H4zM18 20h8v6h-8z" fill="#8ab2e4" stroke="#6a90c8"/></symbol>
      </defs>
    </svg>

    <!-- Desktop files at the right edge -->
    <svg class="deskicons" width="180" height="1340" viewBox="2760 0 180 1340">
      <g><path d="M2768 94h84q4 0 4 5l5 100v9h-96z" fill="url(#gMetal)" stroke="#b5b5b5"/><path d="M2760 170h100l2 22v12q0 5-5 5h-97z" fill="#b9b9ba"/><path d="M2760 190h102v14q0 5-5 5h-97z" fill="#dcdcdd"/><path d="M2800 112h42l3 42h-45z" fill="#000"/><path d="M2812 130h28l-18 15z" fill="#eee"/><path d="M2810 199h38" stroke="#555" stroke-width="3"/></g>
      <g><path d="M2770 322h82q5 0 6 6l8 92h-100z" fill="#b4c0ca" stroke="#8b959d"/><path d="M2760 418h106v8q0 6-6 6h-100z" fill="#8c8b87" stroke="#555"/><circle cx="2856" cy="425" r="3" fill="#6ad03c"/></g>
      <g><path d="M2770 543h80q5 0 6 5l7 92h-100z" fill="#a5a7aa" stroke="#8b8d90"/><path d="M2770 546h79q3 0 4 4l5 66q0 4-4 4h-88z" fill="#f8f8f8"/><path d="M2800 548l22 2 31 27q2 6-9 6-6 0-8 6-14 12-36 10z" fill="#111"/><ellipse cx="2847" cy="598" rx="6" ry="3"/><ellipse cx="2841" cy="604" rx="3" ry="2"/><ellipse cx="2831" cy="601" rx="4" ry="3"/><path d="M2760 637h103v13q0 6-6 6h-97z" fill="#c5cacd" stroke="#8f9295"/><circle cx="2842" cy="648" r="3" fill="#62c33c"/></g>
      <g><path d="M2800 777l52 4-10 92-42-6z" fill="#ececec" stroke="#ccc"/><path d="M2800 774h45l2 102h-47z" fill="#f4f4f4" stroke="#ccc"/><path d="M2800 776h41v98h-41z" fill="#e4e6e9" stroke="#aaa"/><path d="M2815 803l12 2 12 22-6 6-18-7z" fill="#c99a76"/><path d="M2815 826h14v20h-14z" fill="#b9b4bd"/><path d="M2815 845h13v25h-13z" fill="#46517f"/></g>
      <g><path d="M2800 1030q34 6 49-26 6 40-14 62-14 10-35 6z" fill="#4e4a40"/><circle cx="2817" cy="1036" r="7" fill="#b9c0c4"/><path d="M2818 1062l24 12" stroke="#c28443" stroke-width="6"/><path d="M2840 1074l14 6" stroke="#ccc" stroke-width="5"/><path d="M2852 1084q12-4 16 19-16-2-16-19z" fill="#151515"/></g>
      <g><path d="M2780 1234h89v79h-89z" fill="#efefef" stroke="#d4d4d4"/><path d="M2780 1239h84v69h-84z" fill="#3b3b3b"/><path d="M2780 1254h44v42h-44z" fill="#8b8888"/><path d="M2849 1246h14v60h-14z" fill="#222"/><path d="M2849 1248h13v18h-13z" fill="#d8d8d8"/></g>
    </svg>
    <div v-for="(d, k) in deskLabels" :key="k" class="desklabel" :style="{ top: d.y + 'px' }">
      <span v-for="(l, n) in d.lines" :key="l" :style="{ marginRight: d.r[n] + 'px' }">{{ l }}</span>
    </div>

    <!-- PDF reader window -->
    <section class="reader">
      <div class="rtitle">
        <svg width="26" height="34" viewBox="0 0 26 34"><path d="M1 1h16l8 9v24H1z" fill="#767472"/><path d="M17 1v9h8" fill="#4c4a48"/></svg>
        <span v-fit="319">PowerPoint Presentation</span>
      </div>
      <div class="rtabs"><div class="rtab"><span v-fit="79">Tools</span></div><div class="rdoc"><span>PowerPoint Presentation</span></div></div>
      <div class="rtools">
        <svg width="44" height="46" viewBox="0 0 44 46"><path d="M20 3l6 16h16L29 29l5 15-14-9-14 9 5-15L-2 19h16z" fill="none" stroke="#c3c3c3" stroke-width="3"/></svg>
        <svg width="44" height="46" viewBox="0 0 44 46"><path d="M16 33h-5a9 9 0 0 1-1-18q2-11 12-11t12 11a9 9 0 0 1-1 18h-5M22 43V20M14 27l8-8 8 8" fill="none" stroke="#c3c3c3" stroke-width="3.400"/></svg>
        <svg width="44" height="46" viewBox="0 0 44 46"><path d="M8 3h28v12H8z" fill="none" stroke="#c3c3c3" stroke-width="4"/><path d="M3 15h38q3 0 3 3v16H0V18q0-3 3-3z" fill="#c3c3c3"/><path d="M9 26h26v16H9z" fill="#4d4d4d" stroke="#c3c3c3" stroke-width="4"/><path d="M16 31h12M16 36h12" stroke="#c3c3c3" stroke-width="2"/></svg>
        <svg width="46" height="46" viewBox="0 0 46 46"><circle cx="19" cy="19" r="16.500" fill="none" stroke="#c3c3c3" stroke-width="3.500"/><path d="M30 31l13 12" stroke="#c3c3c3" stroke-width="6"/><path d="M10 17h4v4h-4zM17 17h4v4h-4zM24 17h4v4h-4z" fill="#c3c3c3"/></svg>
        <svg width="44" height="46" viewBox="0 0 44 46"><circle cx="22" cy="22" r="19.500" fill="none" stroke="#c3c3c3" stroke-width="3.400"/><path d="M22 34V12M13 21l9-9 9 9" fill="none" stroke="#c3c3c3" stroke-width="3.400"/></svg>
      </div>
      <div class="rsign"><b>Sign</b><span class="ia"><svg width="12" height="38" viewBox="0 0 12 38"><path d="M0 2h12M6 2v34M0 36h12" stroke="#4a94e4" stroke-width="4"/></svg>Ab</span></div>
      <div class="rpage">
        <h1><span v-fit="354">Drawing Ex</span></h1>
        <svg width="480" height="700" viewBox="0 640 480 700">
          <g fill="none" stroke="#222" stroke-width="3"><circle cx="406" cy="1025" r="209"/><path d="M430 887H326l-80 138 80 140h104M403 757h27M407 757v60M407 1025l14 40M392 884v140h10"/></g>
          <path d="M392 884l6 28h-12zM392 1024l6-28h-12z" fill="#111"/>
          <rect x="360" y="808" width="80" height="60" fill="#4a7dc4"/>
          <text x="390" y="850" font-size="30" fill="#fff" text-anchor="middle" font-family="Inter, sans-serif">A</text>
          <rect x="361" y="873" width="80" height="70" fill="none" stroke="#4a7dc4" stroke-width="2"/>
          <path d="M376 888v42" stroke="#aaa" stroke-width="2" stroke-dasharray="4 2"/>
          <text x="401" y="918" font-size="28" fill="#b0b0b0" font-family="Inter, sans-serif">Type</text>
          <text x="0" y="0" transform="translate(383 976) rotate(-90)" font-size="36" fill="#222" stroke="#222" stroke-width=".8" font-family="'Liberation Sans', sans-serif">20</text>
        </svg>
      </div>
    </section>

    <!-- Fusion window -->
    <section class="win">
      <header class="title">
        <i class="dot red"></i><i class="dot yel"></i><i class="dot grn"></i>
        <b v-fit="537">Autodesk Fusion 360 (Education License)</b>
      </header>

      <div class="tabs">
        <svg class="t1" width="28" height="28" viewBox="0 0 28 28"><path d="M0 0h8v8H0zM10 0h8v8h-8zM20 0h8v8h-8zM0 10h8v8H0zM10 10h8v8h-8zM20 10h8v8h-8zM0 20h8v8H0zM10 20h8v8h-8zM20 20h8v8h-8z" fill="#666"/></svg>
        <svg class="t2" width="26" height="32" viewBox="0 0 26 32"><path d="M2 0h15v10h9v20q0 2-2 2H2q-2 0-2-2V2q0-2 2-2z" fill="#666"/><path d="M19 0l7 8h-7z" fill="#666"/></svg>
        <i class="car c1"></i>
        <svg class="t3" width="28" height="28" viewBox="0 0 28 28"><path d="M0 2q0-2 2-2h24q2 0 2 2v24q0 2-2 2H6l-6-6z" fill="#666"/><path d="M6 2v9h16V2h-4v6H11V2z" fill="#ccc"/><path d="M9 28V17h11v11h-3v-7h-4v7z" fill="#ccc"/></svg>
        <svg class="t4" width="28" height="24" viewBox="0 0 28 24"><path d="M10 1L2 9l8 8M2 9h12q11 1 11 14" fill="none" stroke="#666" stroke-width="3.500"/></svg>
        <i class="car c2"></i>
        <svg class="t5" width="28" height="24" viewBox="0 0 28 24"><path d="M18 1l8 8-8 8M26 9H14Q3 10 3 23" fill="none" stroke="#999" stroke-width="3.500"/></svg>
        <i class="car c3"></i>
        <div class="home"><svg width="32" height="28" viewBox="0 0 32 28"><path d="M16 0l6 6V2h4v8l6 6h-4v12h-8V18h-8v10H4V16H0z" fill="#777"/><path d="M14 20h4v8h-4z" fill="#777"/></svg></div>
        <div class="doc">
          <svg width="30" height="32" viewBox="0 0 30 32"><path d="M15 0l15 7v17l-15 8L0 24V7z" fill="#f07d28"/><path d="M0 7l15 8v17L0 24z" fill="#f79a4b"/><path d="M15 0l15 7-15 8L0 7z" fill="#fcb878"/></svg>
          <span v-fit="102">Untitled*</span>
          <svg class="x" width="18" height="18" viewBox="0 0 18 18"><path d="M1 1l16 16M17 1L1 17" stroke="#777" stroke-width="2.500"/></svg>
        </div>
        <div class="plus"><svg width="26" height="26" viewBox="0 0 26 26"><path d="M13 0v26M0 13h26" stroke="#777" stroke-width="5"/></svg></div>
        <svg class="t6" width="32" height="32" viewBox="0 0 32 32"><path d="M22 29A14 14 0 1 1 24 5" fill="none" stroke="#666" stroke-width="4"/><path d="M7 26l7-8" stroke="#666" stroke-width="5"/><path d="M11 11l10 10q9 0 11-8l-4-3-6 5-4-4 6-6-4-3q-7 1-9 9z" fill="#666"/><path d="M28 17q1 8-7 12" fill="none" stroke="#666" stroke-width="4"/></svg>
        <svg class="t7" width="32" height="32" viewBox="0 0 32 32"><circle cx="16" cy="16" r="15" fill="none" stroke="#666" stroke-width="2"/><circle cx="16" cy="16" r="12" fill="#666"/><path d="M16 8v9h8" fill="none" stroke="#ccc" stroke-width="2.500"/></svg>
        <svg class="t7" width="32" height="34" viewBox="0 0 32 34"><path d="M13 4q0-3 3-3t3 3q5 2 6 10l1 8 3 5H2l4-5 1-8q1-8 6-10zM12 30h8l-4 4z" fill="#666"/><circle cx="24" cy="9" r="7" fill="#0b95de" stroke="#ccc"/></svg>
        <b class="t7 help">?</b>
        <div class="avatar">AC</div>
      </div>

      <div class="ribbon">
        <div class="design"><b v-fit="81">DESIGN</b><i class="car"></i></div>
        <nav class="rnav">
          <b class="on"><span v-fit="68">SOLID</span></b>
          <span class="n2" v-fit="96">SURFACE</span><span class="n3" v-fit="58">MESH</span><span class="n4" v-fit="144">SHEET METAL</span><span class="n5" v-fit="86">PLASTIC</span><span class="n6" v-fit="97">UTILITIES</span>
        </nav>
        <div class="groups">
          <div v-for="g in groups" :key="g.name" class="group" :style="{ width: g.w + 'px' }">
            <div :class="['icons', 'g-' + g.icons[0]]"><svg v-for="i in g.icons" :key="i" :class="'ic ic-' + i"><use :href="'#r-' + i" /></svg></div>
            <div class="glabel"><span v-fit="g.t">{{ g.name }}</span><i class="car"></i></div>
          </div>
        </div>
      </div>

      <div class="banner">
        <span v-fit="1368">On Saturday, May 6th, Fusion 360 will undergo maintenance. Please check <u>Health Dashboard</u> for exact timings.</span>
        <svg width="20" height="18" viewBox="0 0 20 18"><path d="M2 1l16 16M18 1L2 17" stroke="#fff" stroke-width="4"/></svg>
      </div>

      <div class="canvas">
        <svg class="scene" width="2400" height="1200" viewBox="0 0 2400 1200">
          <g fill="none">
            <path :d="minor" stroke="#f0f0f0" stroke-width="2" /><path :d="major" stroke="#d9d9d9" stroke-width="2.200" />
            <path :d="edge" stroke="#999" stroke-width="2.400" /><path :d="redAxis" stroke="#ffabab" stroke-width="2" /><path :d="greenAxis" stroke="#9df59d" stroke-width="2" />
          </g>
          <g fill="#7d7d7d" font-family="'Liberation Sans', sans-serif" font-size="30"><text v-for="(t, k) in ticks" :key="k" :transform="t.m">{{ t.v }}</text></g>
          <g transform="translate(863.4 758.4) scale(1 .7)"><circle r="17" fill="#fff" fill-opacity=".6" stroke="#b5b5b5" stroke-width="5"/><path d="M0 0V-16A16 16 0 0 0-16 0zM0 0h16A16 16 0 0 1 0 16z" fill="#aaa" opacity=".8"/></g>
          <path d="M846 756l34 4.700" stroke="#ff9c9c" stroke-width="2"/><path d="M867 745l-7.500 26" stroke="#6fe86f" stroke-width="2"/>
          <!-- wrench body: side wall, top face, openings -->
          <g transform="translate(480 518) scale(.45914 .33333)" stroke="#1d1c1a" stroke-width="2" stroke-linejoin="round">
            <path vector-effect="non-scaling-stroke" fill-rule="evenodd" fill="url(#gWrench)" d="M66 365V410C75 530 170 616 295 616C370 614 420 590 460 543C475 528 500 518 530 520L1140 635C1160 637 1175 645 1190 663C1220 720 1265 743 1320 743C1410 743 1466 685 1470 600V555L1325 440L1130 460L560 350L295 160zM156 365L190 468L340 500L424 402L390 298L244 270zM600 445C605 435 615 430 638 430L1078 517C1090 517 1100 525 1104 536C1095 548 1080 552 1066 550L632 462C615 460 605 452 600 445zM1226 545L1238 630L1368 660L1420 573L1342 500z"/>
            <path vector-effect="non-scaling-stroke" fill-rule="evenodd" fill="#656055" d="M66 365C70 240 165 152 295 152C390 155 470 205 500 295C510 325 525 340 560 343L1130 455C1180 470 1205 465 1235 447C1265 428 1295 421 1325 422C1410 425 1470 480 1470 570C1468 650 1405 706 1325 706C1265 704 1215 675 1190 635C1180 610 1160 598 1140 598L530 483C500 480 478 488 460 503C415 555 365 578 295 578C165 578 70 490 66 365zM146 343L190 468L340 500L438 395L390 260L244 230zM638 392C612 390 594 408 595 428C597 446 610 458 632 462L1066 550C1092 551 1109 535 1109 516C1107 496 1095 482 1070 478zM1222 515L1238 630L1368 660L1432 552L1342 460z"/>
            <g fill="#5f605e"><path vector-effect="non-scaling-stroke" d="M244 230L390 260V298L244 270z"/><path vector-effect="non-scaling-stroke" fill="#4c4941" d="M244 230L146 343L156 365L244 270z"/><path vector-effect="non-scaling-stroke" fill="#555" d="M390 260L438 395L424 402L390 298z"/>
            <path vector-effect="non-scaling-stroke" d="M638 392L1078 479V517L638 430z"/><path vector-effect="non-scaling-stroke" fill="#4c4941" d="M638 392C612 390 590 408 596 435L600 445C605 435 615 430 638 430z"/><path vector-effect="non-scaling-stroke" fill="#4c4941" d="M1078 479C1100 482 1110 500 1109 520L1104 536C1100 525 1090 517 1078 517z"/>
            <path vector-effect="non-scaling-stroke" fill="#4c4941" d="M1222 515L1342 460V500L1226 545z"/><path vector-effect="non-scaling-stroke" d="M1342 460L1432 552L1420 573L1342 500z"/></g>
            <path vector-effect="non-scaling-stroke" d="M460 503V543M530 483V520M1140 598V635M1190 635V663" fill="none"/>
          </g>
          <!-- view cube -->
          <g transform="translate(-420 -462)">
            <ellipse cx="2715" cy="622" rx="62" ry="24" fill="#e4e4e4" class="soft"/>
            <path d="M2680 511l80 8-12 53-90-12z" fill="#f3f3f3"/><path d="M2658 560l90 12-4 60-79-11z" fill="#ececec"/><path d="M2760 519l-12 53-4 60 11-32z" fill="#dcdcdc"/>
            <path d="M2680 511l80 8-12 53-90-12zM2760 519l-5 75-11 38 4-60" fill="none" stroke="#aaa" stroke-width="1.800" stroke-dasharray="9 4"/>
            <path d="M2676 556l57 5-1 20-56-6z" fill="#dfe2ec" opacity=".7"/>
            <path d="M2656 551l9 70" stroke="#7777f5" stroke-width="4"/><path d="M2665 621l93 16" stroke="#f39090" stroke-width="3"/>
            <g font-family="Inter, sans-serif" font-weight="700"><text x="2645" y="549" font-size="23" fill="#8888f2">Z</text><text x="2762" y="647" font-size="21" fill="#f69a9a">X</text>
            <text transform="matrix(1 .08 -.15 .8 2695 544)" font-size="19" fill="#999" textLength="36">TOP</text><text transform="matrix(1 .1 0 .9 2673 603)" font-size="20" fill="#a0a0a0" textLength="61">FRONT</text></g>
          </g>
        </svg>

        <div class="panels">
          <div class="panel">
            <svg width="20" height="14" viewBox="0 0 20 14"><path d="M9 0v14L0 7zM20 0v14l-9-7z" fill="#333"/></svg>
            <span v-fit="100">BROWSER</span>
            <svg class="pm" width="20" height="20" viewBox="0 0 20 20"><circle cx="10" cy="10" r="9.500" fill="#333"/><path d="M4.500 10h11" stroke="#fff" stroke-width="2.500"/></svg><i class="grip"></i>
          </div>
          <div class="row root">
            <svg width="16" height="16" viewBox="0 0 16 16"><path d="M15 1v13H1z" fill="#777" stroke="#111" stroke-width="1.500"/></svg>
            <div class="chip"><svg class="eye"><use href="#eye" /></svg>
              <div class="sel"><svg width="28" height="28" viewBox="0 0 28 28"><path d="M2 7l6-6h18v19l-6 7H2z" fill="#dfe3ec" stroke="#444" stroke-width="1.500"/><path d="M20 7l6-6v19l-6 7z" fill="#a7adba"/></svg><b v-fit="113">(Unsaved)</b></div>
              <svg width="26" height="26" viewBox="0 0 26 26"><circle cx="13" cy="13" r="12" fill="#e3e8f3" stroke="#555" stroke-width="1.500"/><circle cx="13" cy="13" r="5" fill="#333"/></svg>
            </div>
          </div>
          <div v-for="r in tree" :key="r.label" class="row">
            <svg width="13" height="20" viewBox="0 0 13 20"><path d="M1 1v18l4-1 7-8-7-8z" fill="#fff" stroke="#333" stroke-width="1.500"/></svg>
            <div class="chip sub">
              <svg v-if="r.eye" class="eye"><use :href="'#' + r.eye" /></svg>
              <svg :class="['fold', r.icon]"><use :href="'#' + r.icon" /></svg>
              <span v-fit="r.t">{{ r.label }}</span>
            </div>
          </div>
          <div class="panel comments">
            <span v-fit="124">COMMENTS</span>
            <svg class="pm" width="20" height="20" viewBox="0 0 20 20"><circle cx="10" cy="10" r="9.500" fill="#333"/><path d="M4.500 10h11M10 4.500v11" stroke="#fff" stroke-width="2.200"/></svg><i class="grip"></i>
          </div>
        </div>

        <div class="navbar">
          <template v-for="n in nav" :key="n[0]"><svg height="32" :width="n[1]" :style="{ marginLeft: n[3] + 'px' }"><use :href="'#n-' + n[0]" /></svg><i v-if="n[2]" class="car"></i></template>
        </div>
      </div>

      <footer class="timeline">
        <svg width="24" height="28" viewBox="0 0 24 28"><path d="M0 0h4v28H0zM24 1v26L5 14z" fill="#484848"/></svg>
        <svg width="26" height="28" viewBox="0 0 26 28"><path d="M19 1v26L0 14zM21 8h4v12h-4z" fill="#484848"/></svg>
        <svg width="24" height="32" viewBox="0 0 24 32"><path d="M0 0v32l24-16z" fill="#484848"/></svg>
        <svg width="26" height="28" viewBox="0 0 26 28"><path d="M7 1v26l19-13zM0 8h4v12H0z" fill="#484848"/></svg>
        <svg width="24" height="28" viewBox="0 0 24 28"><path d="M20 0h4v28h-4zM0 1v26l19-13z" fill="#484848"/></svg>
        <svg class="feat" width="104" height="66" viewBox="0 0 104 66">
          <path d="M2 14h26v26H2z" fill="none" stroke="#777" stroke-width="1.500"/><path d="M8 20h11v2q0 9-9 12H8z" fill="none" stroke="#777" stroke-width="1.500"/>
          <path d="M0 12h4v4H0zM26 12h4v4h-4zM0 38h4v4H0zM7 19h4v4H7zM18 19h4v4h-4zM7 31h4v4H7z" fill="#2d84cc"/><path d="M16 43l2-6 9-9 4 4-9 9z" fill="#f3b33e"/><path d="M27 28l2-2 4 3-2 3z" fill="#d33"/>
          <path d="M50 38h17l6-6v5l-6 6H50z" fill="#b0b0b0"/><path d="M50 18h17v19H50z" fill="#67aee6"/><path d="M50 18l5-6h18l-6 6z" fill="#87c8fa"/><path d="M67 18l6-6v18l-6 7z" fill="#3f8fd0"/><path d="M76 38V14" stroke="#222" stroke-width="1.500"/>
          <path d="M18 50v12h46V50" fill="none" stroke="#c8c8c8" stroke-width="4"/><path d="M76 0h24v8l-10 10v46h-4V18L76 8z" fill="#5c5c5c"/>
        </svg>
        <svg class="cog" width="34" height="34"><use href="#gear" /></svg>
      </footer>
    </section>

    <!-- Menu bar -->
    <header class="menubar">
      <svg width="26" height="32" viewBox="0 0 26 32"><path d="M18 0q1 6-5 8-1-6 5-8zM13 9q2 0 5-1 5 0 7 4-4 2-4 6t5 7q-3 7-6 7-2 0-3.500-1T13 30t-3.500 1T6 32Q3 32 1 26-1 20 1 14q2-6 7-6 3 0 5 1z" fill="#252220"/></svg>
      <b class="app" v-fit="143">Fusion 360</b>
      <span v-for="m in menus" :key="m[0]" v-fit="m[1]">{{ m[0] }}</span>
      <div class="status">
        <svg v-for="s in status" :key="s[0]" :width="s[1]" :class="'st st-' + s[0]"><use :href="'#s-' + s[0]" /></svg>
        <span class="clock"><span v-fit="109">Fri 5 May</span><span v-fit="100">5:34 PM</span></span>
      </div>
    </header>

    <!-- Dock -->
    <footer class="dock">
      <template v-for="(d, k) in dock" :key="k">
        <div v-if="d.sep" class="sep"></div>
        <div v-else class="cell">
          <div v-if="d.a" :class="['adobe', d.c]">{{ d.a }}</div>
          <svg v-else :class="['app-ic', 'a-' + d.i]"><use :href="'#d-' + d.i" /></svg>
          <span v-if="d.n" class="num">{{ d.n }}</span>
          <span v-if="d.badge" class="badge">{{ d.badge }}</span>
          <i v-if="d.on" class="run"></i>
        </div>
      </template>
    </footer>
  </div>
</template>

<style>
html, body { margin: 0; overflow: hidden; }
</style>

<style scoped>
.desktop { position: relative; width: 2940px; height: 1912px; overflow: hidden; background: linear-gradient(90deg, #faf0e5, #f3ebe4 30%, #f5ede5 80%, #f8f0e6); font-family: Inter, sans-serif; }
.defs, .deskicons { position: absolute; }
.deskicons { left: 2760px; top: 0; }
svg { flex: none; display: block; }
span, b { white-space: nowrap; }
.desklabel { position: absolute; right: 0; display: flex; flex-direction: column; align-items: flex-end; color: #fff; font-size: 24px; font-weight: 600; line-height: 31px; text-shadow: 0 1px 4px rgba(0,0,0,.55), 0 2px 8px rgba(0,0,0,.35); }

.menubar { position: absolute; left: 0; top: 0; width: 2940px; height: 72px; box-sizing: border-box; background: #fef6ec; display: flex; align-items: center; gap: 43px; padding: 0 35px 2px 40px; font-size: 25px; color: #252220; }
.menubar .app { margin-left: -2px; font-weight: 700; }
.status { margin-left: auto; display: flex; align-items: center; gap: 38px; }
.st { height: 30px; margin-top: 2px; }
.st-ukraine, .st-camera, .st-rec { height: 34px; }
.st-rec { margin: 2px -5px 0 -4px; }
.clock { display: flex; gap: 17px; margin-left: -3px; }

.reader { position: absolute; left: 0; top: 73px; width: 1841px; height: 1646px; background: #fff; border-radius: 0 22px 4px 0; overflow: hidden; box-shadow: 0 0 0 1.500px #222, 0 24px 60px rgba(0,0,0,.35); }
.rtitle { height: 57px; background: #3c3a38; border-top: 2px solid #71706e; box-sizing: border-box; display: flex; color: #787674; font-size: 25px; font-weight: 700; gap: 10px; align-items: flex-start; }
.rtitle svg { margin: 12px 0 0 682px; }
.rtitle span { margin-top: 10px; }
.rtabs { height: 71px; background: #4d4d4d; border-top: 2px solid #1c1c1c; box-sizing: border-box; display: flex; }
.rtab { width: 191px; box-sizing: border-box; padding-left: 55px; background: #424242; border-right: 2px solid #2e2e2e; border-bottom: 2px solid #2e2e2e; font-size: 32px; line-height: 63px; color: #b4b4b4; }
.rdoc { padding-left: 54px; font-size: 26px; line-height: 69px; color: #eee; }
.rtools { height: 94px; background: #4d4d4d; display: flex; gap: 43px; padding-top: 25px; box-sizing: border-box; }
.rsign { height: 94px; background: #4d4d4d; border-top: 2px solid #3a3a3a; border-bottom: 2px solid #3a3a3a; box-sizing: border-box; display: flex; align-items: center; font-size: 27px; color: #eee; padding-top: 2px; }
.rsign b { width: 387px; font-weight: 600; font-size: 28px; letter-spacing: -.4px; }
.ia { display: flex; align-items: center; color: #4a94e4; font-size: 30px; }
h1 { margin: 0; padding: 131px 0 0 71px; height: 251px; box-sizing: border-box; font: 700 69px/84px Roboto, sans-serif; color: #000; }

.win { position: absolute; left: 420px; top: 108px; width: 2400px; height: 1654px; border-radius: 20px; background: #f2f2f2; box-shadow: 0 0 0 1px rgba(0,0,0,.35), 0 36px 90px rgba(0,0,0,.6); overflow: hidden; font-family: 'Noto Sans', sans-serif; font-size: 21px; color: #333; }
.title { height: 57px; box-sizing: border-box; border-bottom: 2px solid #a9a9a9; background: #faf8f9; display: flex; align-items: center; padding-left: 16px; gap: 16px; font-family: Inter, sans-serif; font-size: 25px; }
.title b { margin-left: 795px; color: #403e3f; }
.dot { width: 24px; height: 24px; border-radius: 50%; box-sizing: border-box; border: 1px solid rgba(0,0,0,.15); }
.red { background: #ec6a5e; } .yel { background: #f4bf4f; } .grn { background: #61c554; }

.tabs { height: 63px; background: #cbcbcb; display: flex; align-items: center; }
.car { width: 0; height: 0; border: 6px solid transparent; border-top: 9px solid #333; border-bottom: 0; flex: none; }
.tabs .car { border-width: 10px 7.500px 0; border-top-color: #666; margin-top: -4px; }
.tabs .c3 { border-top-color: #999; }
.t1 { margin-left: 18px; } .t2 { margin-left: 39px; } .tabs .c1 { margin-left: 12px; } .t3 { margin-left: 37px; } .t4 { margin-left: 39px; } .tabs .c2 { margin-left: 12px; } .t5 { margin-left: 23px; } .tabs .c3 { margin-left: 13px; }
.home { margin-left: 13px; width: 78px; height: 56px; align-self: flex-end; background: #bababa; border-radius: 8px 8px 0 0; display: flex; align-items: center; padding-left: 26px; padding-top: 6px; box-sizing: border-box; }
.doc { margin-left: 8px; width: 1490px; height: 56px; align-self: flex-end; background: #f2f2f2; border-radius: 8px 8px 0 0; display: flex; align-items: center; box-sizing: border-box; padding: 5px 13px 0 663px; gap: 9px; }
.doc .x { margin-left: auto; }
.plus { margin-left: 8px; width: 56px; height: 56px; align-self: flex-end; background: #bababa; border-radius: 8px 8px 0 0; display: flex; align-items: center; justify-content: center; }
.t6 { margin-left: 24px; } .t7 { margin-left: 34px; }
.help { width: 32px; height: 32px; border-radius: 50%; background: #5f5f5f; color: #ccc; font-size: 23px; line-height: 32px; text-align: center; }
.avatar { margin-left: 38px; width: 50px; height: 50px; border-radius: 50%; background: #efefef; text-align: center; line-height: 49px; font-size: 23px; }

.ribbon { height: 170px; box-sizing: border-box; display: grid; grid-template: 53px 110px / 242px 1fr; border-bottom: 7px solid #f2f2f2; box-shadow: inset 0 -2px 0 #c8c8cc; }
.design { grid-row: 1 / 3; margin: 21px 0 0 24px; width: 218px; height: 121px; box-sizing: border-box; border: 2px solid #cfcfcf; border-radius: 8px; display: flex; align-items: center; justify-content: center; gap: 10px; color: #222; }
.rnav { display: flex; line-height: 44px; font-size: 21.500px; }
.on { margin-left: 35px; height: 47px; width: 116px; box-sizing: border-box; border-bottom: 6px solid #1590d0; color: #1590d0; text-align: center; }
.n2 { margin-left: 62px; } .n3 { margin-left: 91px; } .n4 { margin-left: 88px; } .n5 { margin-left: 92px; } .n6 { margin-left: 90px; }
.groups { display: flex; }
.group { height: 102px; box-sizing: border-box; border-right: 2px solid #ccc; display: flex; flex-direction: column; align-items: center; }
.group:last-child { border: 0; }
.icons { display: flex; gap: 22px; height: 77px; padding-left: 3px; }
.g-sketch { padding-left: 12px; }
.g-select { padding-left: 0; }
.icons .ic { width: 64px; height: 64px; margin-top: 1px; overflow: visible; }
.icons .ic-select { width: 76px; height: 76px; margin-top: -5px; }
.glabel { display: flex; align-items: center; gap: 7px; line-height: 28px; font-size: 21.500px; }
.glabel .car { margin-top: -4px; }

.banner { height: 64px; background: #faa21e; display: flex; align-items: center; padding: 0 32px 0 489px; justify-content: space-between; color: #fff; font: 700 27px 'Liberation Sans', sans-serif; }
.banner u { text-underline-offset: 4px; text-decoration-thickness: 2px; }

.canvas { position: relative; height: 1200px; background: #fff; }
.scene { position: absolute; left: 0; top: 0; }
.soft { filter: blur(8px); }
.panels { position: relative; width: 620px; height: 1192px; padding-top: 8px; box-sizing: border-box; display: flex; flex-direction: column; }
.panel { margin-left: 8px; width: 599px; height: 48px; box-sizing: border-box; background: #f1f1f1; border: 1px solid #ccc; border-bottom: 3px solid #c8c8c8; display: flex; align-items: center; padding: 2px 0 0 9px; gap: 20px; color: #666; flex: none; margin-bottom: 8px; }
.panel .pm { margin-left: auto; margin-right: -8px; }
.grip { width: 2px; height: 22px; border-left: 2px solid #777; border-right: 2px solid #999; margin-right: 2px; }
.comments { margin-top: auto; margin-bottom: 2px; padding-left: 49px; }
.row { height: 48px; display: flex; align-items: center; padding-left: 82px; color: #333; flex: none; }
.row.root { padding-left: 44px; }
.chip { height: 40px; background: #f1f1f1; display: flex; align-items: center; margin-left: 21px; padding: 0 18px 0 6px; }
.root .chip { margin-left: 20px; padding-right: 15px; }
.eye { width: 32px; height: 24px; }
.fold { width: 32px; height: 26px; margin-right: 28px; }
.fold.gear { height: 32px; }
.eye + .fold { margin-left: 18px; }
.sel { margin: 0 9px 0 12px; width: 196px; height: 32px; background: #999; display: flex; align-items: center; color: #fff; padding-left: 8px; box-sizing: border-box; gap: 30px; }
.navbar { position: absolute; left: 964px; top: 1140px; width: 474px; height: 48px; background: #f1f1f1; display: flex; align-items: center; }
.navbar .car { border-width: 9px 6.500px 0; margin-left: 8px; }

.timeline { height: 100px; box-sizing: border-box; border-top: 6px solid #cbcbcb; background: linear-gradient(#f2f2f2, #ececec); display: flex; align-items: center; gap: 25px; padding: 2px 26px 0 22px; }
.feat { margin: 6px 0 0 21px; }
.cog { margin-left: auto; }

.dock { position: absolute; left: 48px; top: 1817px; width: 2844px; height: 86px; box-sizing: border-box; border-radius: 26px; background: #aaa39a; border: 1.500px solid #6c6660; box-shadow: inset 0 0 0 2px #bcb6ae; display: flex; align-items: flex-start; padding-left: 5px; }
.cell { position: relative; width: 66px; height: 84px; flex: none; display: flex; justify-content: center; padding-top: 14px; box-sizing: border-box; }
.app-ic { width: 50px; height: 50px; overflow: visible; }
.a-camera, .a-printer, .a-win1, .a-win2 { width: 60px; height: 60px; margin-top: -5px; }
.a-pdf { width: 54px; height: 54px; margin-top: -2px; }
.a-gimp { width: 58px; height: 52px; }
.a-trash { width: 46px; height: 58px; margin-top: -5px; }
.adobe { width: 50px; height: 50px; border-radius: 11px; text-align: center; font: 700 26px/50px 'Noto Sans', sans-serif; letter-spacing: -1px; }
.br { background: #040b16; color: #fff; } .ae { background: #00005b; color: #9c9bfb; } .ps { background: #081f35; color: #55a8f8; } .xd { background: #430b38; color: #f26bf0; } .ai { background: #310400; color: #f79d30; }
.num { position: absolute; right: 2px; top: 3px; color: #fff; font: 700 29px/32px 'Noto Sans', sans-serif; text-shadow: 0 1px 2px #555; }
.badge { position: absolute; right: 1px; top: 6px; width: 24px; height: 24px; border-radius: 50%; background: #ea4c3e; color: #fff; font-size: 15px; line-height: 24px; text-align: center; }
.run { position: absolute; left: 29px; top: 72px; width: 8px; height: 8px; border-radius: 50%; background: #fff; }
.sep { width: 2px; height: 60px; background: #d5d0ca; margin: 12px 13px 0 15px; flex: none; }
</style>
